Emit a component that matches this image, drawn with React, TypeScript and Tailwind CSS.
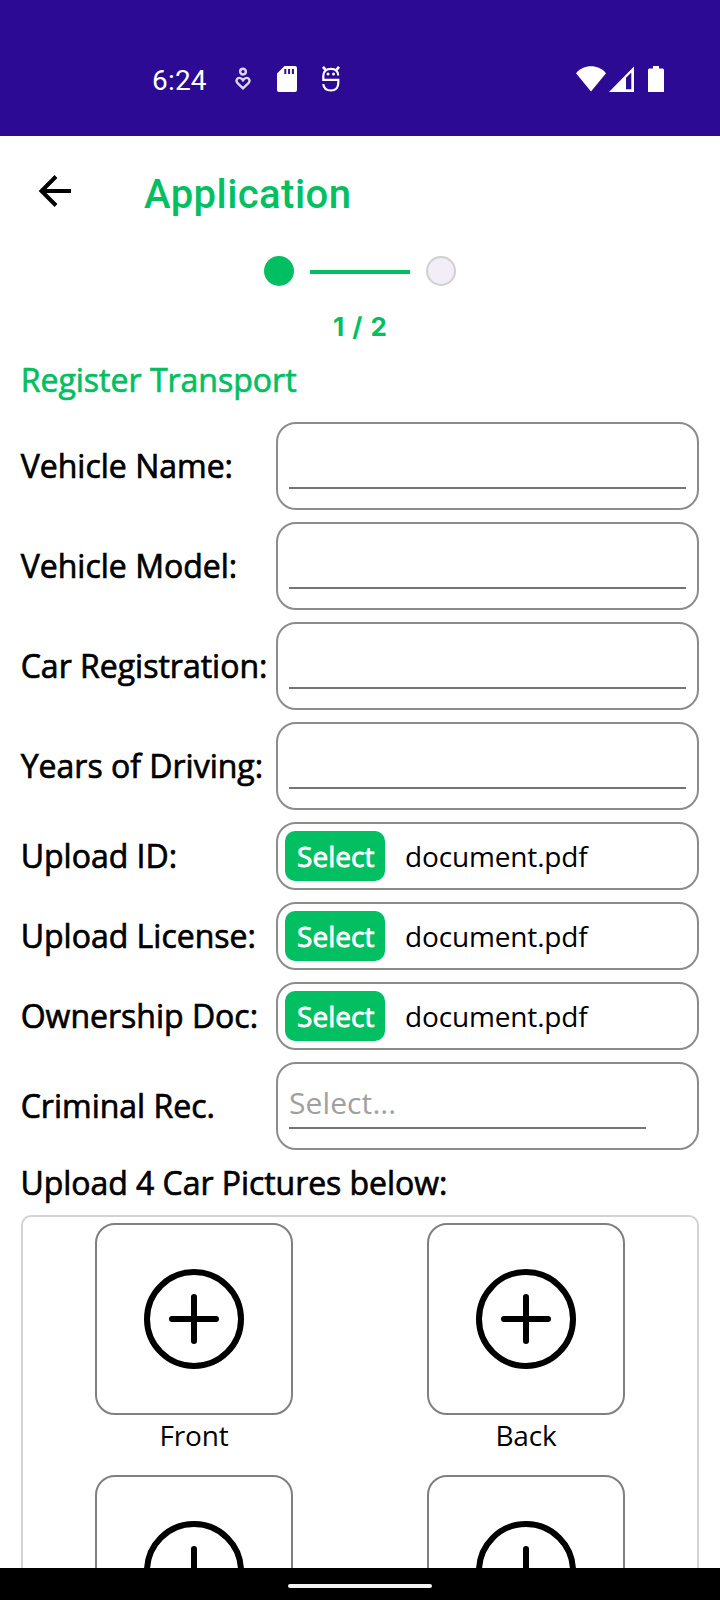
import type { ReactNode } from "react";

const label =
  "whitespace-nowrap text-[32px] leading-[44px] text-black [-webkit-text-stroke:0.7px_currentColor]";

function StatusBar() {
  return (
    <header className="flex h-[136px] shrink-0 items-start bg-[#2c0a94] text-white">
      <div className="mt-[65px] ml-[152px] w-[83px] font-[Roboto] text-[28px] leading-8 tracking-[0.2px]">6:24</div>
      <svg className="mt-[67px] h-6 w-4" viewBox="0 0 16 24" fill="none" stroke="#dcd6f0" strokeWidth="2.4">
        <circle cx="8" cy="4.6" r="2.9" />
        <path d="M8 21.300 2.600 16.200C0.300 13.700 2 10.900 4.400 10.900c1.600 0 2.700 1 3.600 2.300.9-1.300 2-2.300 3.600-2.300 2.400 0 4.100 2.800 1.800 5.300Z" />
      </svg>
      <svg className="mt-[66px] ml-[26px] h-[26px] w-5" viewBox="0 0 20 26">
        <path
          fillRule="evenodd"
          fill="#fff"
          d="M7.500 0H18a2 2 0 0 1 2 2v22a2 2 0 0 1-2 2H2a2 2 0 0 1-2-2V7.500ZM7.300 3v5h2V3Zm3.800 0v5h2V3Zm3.800 0v5h2V3Z"
        />
      </svg>
      <svg className="mt-[66px] ml-6 h-[26px] w-5" viewBox="0 0 20 26" fill="none" stroke="#fff" strokeWidth="2.200">
        <path d="M17.200 9.500C17.200 5.200 14.500 2.900 10 2.900S2.300 5.200 2.300 9.500v4.300h15v2.700c0 5.300-3 8-7.300 8s-7.400-2.400-7.700-6.500" />
        <path d="m2 .8 2.500 3M18 .8l-2.500 3" strokeWidth="2.600" />
        <circle cx="7" cy="8" r="1.500" fill="#fff" stroke="none" />
        <circle cx="12.500" cy="8" r="1.500" fill="#fff" stroke="none" />
      </svg>
      <svg className="mt-[66px] ml-[235px] h-[26px] w-[30px]" viewBox="0 0 30 26">
        <path fill="#fff" d="M15 25.500 0 7.200C4 2.500 9 .3 15 .3s11 2.200 15 6.900Z" />
      </svg>
      <svg className="mt-[66px] ml-[3px] h-[26px] w-[25px]" viewBox="0 0 25 26">
        <path fill="#fff" fillRule="evenodd" d="M0 26 25 .5V26ZM17 23.300h5.300V6.600L17 11.800Z" />
      </svg>
      <svg className="mt-[66px] ml-[14px] h-[26px] w-4" viewBox="0 0 16 26">
        <path fill="#fff" d="M5 0h6v2.500h3.500A1.500 1.500 0 0 1 16 4v22H0V4a1.500 1.500 0 0 1 1.500-1.500H5Z" />
      </svg>
    </header>
  );
}

function FieldRow({ name, children, tall }: { name: string; children: ReactNode; tall?: boolean }) {
  return (
    <div className={tall ? "flex h-[88px] items-center" : "flex h-[68px] items-center"}>
      <div className={`${label} w-[256px] shrink-0 pl-[0.7px]`}>{name}</div>
      <div className="flex h-full w-[423px] shrink-0 items-stretch rounded-[20px] border-2 border-[#8c8c8c]">
        {children}
      </div>
    </div>
  );
}

function TextLine() {
  return <div className="mx-[11px] mb-[19px] flex-1 border-b-2 border-[#747474]" />;
}

function FilePicker() {
  return (
    <>
      <button className="mt-[7px] ml-[7px] h-[50px] w-[100px] rounded-[10px] bg-[#02bf62] pl-[1.5px] text-center text-[28px] leading-[50px] text-white [-webkit-text-stroke:0.8px_currentColor]">
        Select
      </button>
      <div className="mt-[7px] ml-5 text-[28px] leading-[50px] tracking-[-0.15px] text-black">document.pdf</div>
    </>
  );
}

function PictureSlot({ name }: { name?: string }) {
  return (
    <div className="flex h-[252px] w-[198px] flex-col items-center">
      <div className="flex h-[192px] w-full shrink-0 items-center justify-center rounded-[20px] border-2 border-[#808080]">
        <svg className="h-[100px] w-[100px]" viewBox="0 0 100 100" fill="none" stroke="#000" strokeWidth="6">
          <circle cx="50" cy="50" r="47" />
          <path d="M50 28v44M28 50h44" strokeLinecap="round" />
        </svg>
      </div>
      {name && (
        <div className="mt-px text-[28px] leading-[38px] tracking-[-0.15px] text-black">{name}</div>
      )}
    </div>
  );
}

export default function App() {
  return (
    <div className="flex h-[1600px] w-[720px] flex-col overflow-hidden bg-white font-['Open_Sans',sans-serif]">
      <StatusBar />
      <main className="flex min-h-0 flex-1 flex-col overflow-hidden">
        <div className="flex h-[120px] shrink-0 items-start">
          <svg className="mt-[38px] ml-[38px] h-[34px] w-[34px]" viewBox="0 0 34 34" fill="none" stroke="#000" strokeWidth="4">
            <path d="M33 17H4M18 2.500 3.500 17 18 31.500" />
          </svg>
          <h1 className="mt-[35px] ml-[72px] font-[Roboto] text-[40px] leading-[48px] font-medium tracking-[0.45px] text-[#02bf62]">
            Application
          </h1>
        </div>
        <div className="flex h-[30px] shrink-0 items-center justify-center gap-4">
          <div className="size-[30px] rounded-full bg-[#02bf62]" />
          <div className="mt-[2px] h-1 w-[100px] bg-[#02bf62]" />
          <div className="size-[30px] rounded-full border-2 border-[#d0d0d0] bg-[#f3edf7]" />
        </div>
        <div className="mt-[22px] h-[38px] shrink-0 text-center font-[Inter] text-[26px] leading-[38px] font-bold text-[#02bf62] [word-spacing:2px]">
          1 / 2
        </div>
        <h2 className="mt-[12px] ml-[20.700px] h-[44px] shrink-0 whitespace-nowrap text-[32px] leading-[44px] text-[#02bf62] [-webkit-text-stroke:0.7px_currentColor]">
          Register Transport
        </h2>
        <form className="mt-[20px] ml-5 flex shrink-0 flex-col gap-3">
          <FieldRow name="Vehicle Name:" tall><TextLine /></FieldRow>
          <FieldRow name="Vehicle Model:" tall><TextLine /></FieldRow>
          <FieldRow name="Car Registration:" tall><TextLine /></FieldRow>
          <FieldRow name="Years of Driving:" tall><TextLine /></FieldRow>
          <FieldRow name="Upload ID:"><FilePicker /></FieldRow>
          <FieldRow name="Upload License:"><FilePicker /></FieldRow>
          <FieldRow name="Ownership Doc:"><FilePicker /></FieldRow>
          <FieldRow name="Criminal Rec." tall>
            <div className="mb-[19px] ml-[11px] w-[357px] border-b-2 border-[#747474] pt-[18px] text-[30px] leading-[42px] tracking-[0.1px] text-[#a0a0a0]">
              Select...
            </div>
          </FieldRow>
        </form>
        <div className={`${label} mt-[11px] ml-[20.500px] shrink-0 tracking-[-0.05px]`}>Upload 4 Car Pictures below:</div>
        <section className="mt-[10px] ml-[21px] grid w-[678px] shrink-0 grid-cols-2 justify-items-center rounded-[10px] border-2 border-[#d3d3d3] px-[5px] pt-[6px]">
          <PictureSlot name="Front" />
          <PictureSlot name="Back" />
          <PictureSlot />
          <PictureSlot />
        </section>
      </main>
      <footer className="flex h-8 shrink-0 items-center justify-center bg-black pt-[4px]">
        <div className="h-1 w-[144px] rounded-full bg-[#f2f2f2]" />
      </footer>
    </div>
  );
}
